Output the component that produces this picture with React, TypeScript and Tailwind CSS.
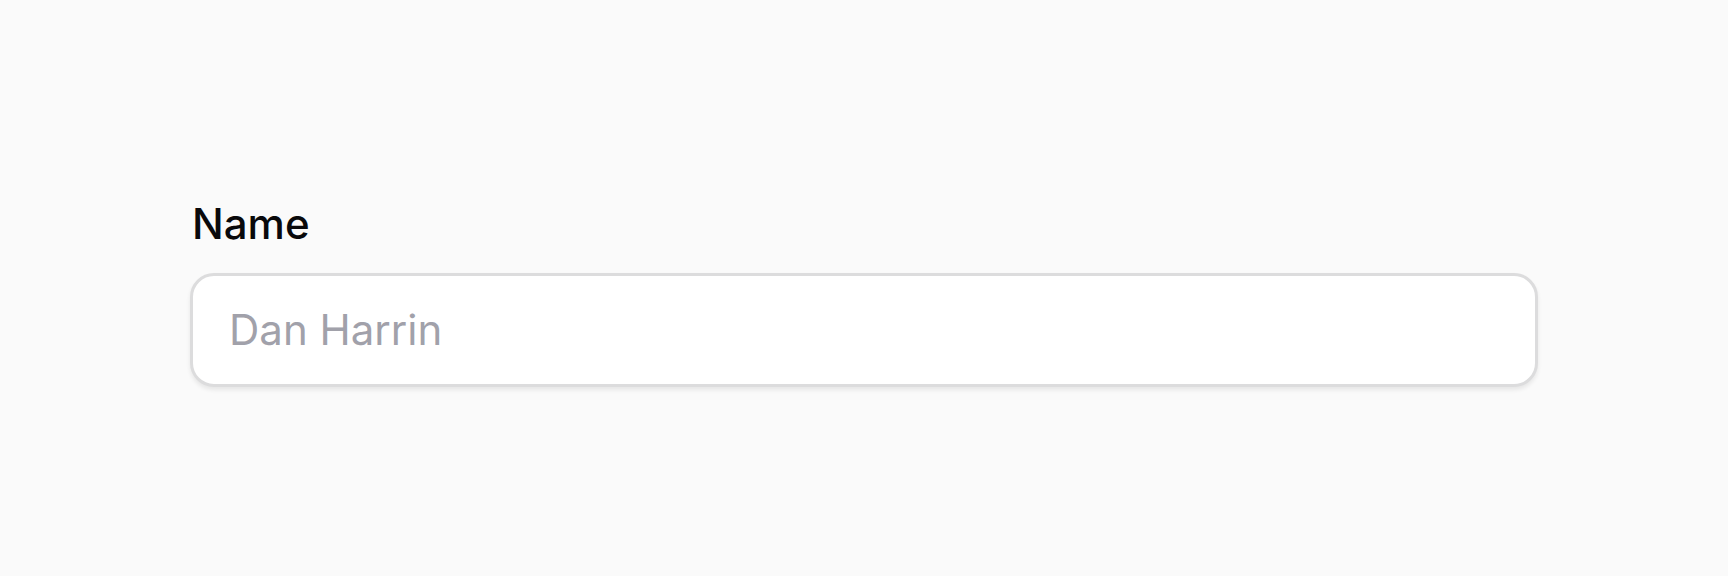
import React from 'react';

const App = () => {
  return (
    <div className="flex h-[576px] w-full items-center justify-center bg-[#fafafa] pt-[2px] font-['Inter',sans-serif]">
      <div className="flex w-[1348px] flex-col gap-[19px]">
        {/* label */}
        <label htmlFor="name" className="pt-[3px] pl-[2px] text-[42px] leading-[60px] font-medium text-[#09090b]">
          Name
        </label>

        {/* input */}
        <div className="rounded-[24px] border-[3px] border-[#dcdcdd] bg-white shadow-[0_3px_4px_rgba(0,0,0,0.08)]">
          <input
            id="name"
            type="text"
            placeholder="Dan Harrin"
            className="block w-full bg-transparent px-[36px] py-[18px] text-[42px] leading-[72px] text-[#09090b] outline-none placeholder:text-[#a1a1aa]"
          />
        </div>
      </div>
    </div>
  );
};

export default App;
